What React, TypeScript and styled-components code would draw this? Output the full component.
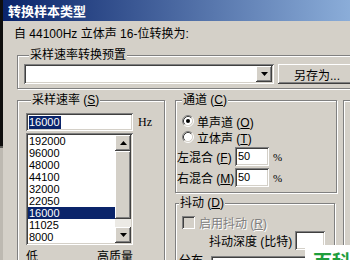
import React from "react";
import styled, { createGlobalStyle, css } from "styled-components";

const Global = createGlobalStyle`
  html, body { margin: 0; padding: 0; background: #d4d0c8; }
  body {
    width: 350px; height: 260px; overflow: hidden;
    font-family: "Liberation Sans", "Noto Sans CJK SC", sans-serif;
    font-size: 12px; color: #000;
  }
  * { box-sizing: border-box; }
`;

const raised = css`
  background: #d4d0c8;
  box-shadow: inset -1px -1px #404040, inset 1px 1px #fff, inset -2px -2px #808080, inset 2px 2px #d4d0c8;
`;
const sunken = css`
  box-shadow: inset 1px 1px #808080, inset -1px -1px #fff, inset 2px 2px #404040, inset -2px -2px #d4d0c8;
`;

const Screen = styled.div`
  position: relative;
  display: flex;
  width: 350px;
  height: 260px;
  overflow: hidden;
`;

const Edge = styled.div`
  flex: 0 0 3px;
  background: linear-gradient(to bottom, #0e0e0e 0, #0e0e0e 146px, #5a5a56 146px, #5a5a56 148px, #bdb9b1 148px);
`;

const Window = styled.div`
  flex: 0 0 420px;
  display: flex;
  flex-direction: column;
`;

const TitleBar = styled.div`
  height: 21px;
  padding-left: 5px;
  background: linear-gradient(to right, #0a246a, #a6caf0);
  color: #fff;
  font-family: "Noto Sans CJK SC", sans-serif;
  font-weight: bold;
  font-size: 13px;
  line-height: 21px;
`;

const Body = styled.div`
  display: flex;
  flex-direction: column;
  padding: 6px 0 0 11px;
`;

const InfoLine = styled.div`
  line-height: 14px;
  white-space: nowrap;
`;

const Group = styled.fieldset`
  margin: 0;
  padding: 0;
  min-width: 0;
  border: 1px solid #808080;
  box-shadow: inset 1px 1px #fff, 1px 1px #fff;
`;

const Legend = styled.legend<{ $ml?: number }>`
  margin-left: ${(p) => p.$ml ?? 5}px;
  padding: 0 1px;
  line-height: 14px;
  background: #d4d0c8;
  white-space: nowrap;
`;

const PresetGroup = styled(Group)`
  margin: 7px 0 0 3px;
  width: 380px;
  padding: 2px 0 4px 6px;
  display: flex;
  gap: 4px;
`;

const Combo = styled.div`
  width: 250px;
  height: 20px;
  padding: 2px;
  background: #fff;
  ${sunken};
  display: flex;
  justify-content: flex-end;
`;

const DropBtn = styled.div`
  width: 16px;
  height: 16px;
  ${raised};
  display: flex;
  align-items: center;
  justify-content: center;
`;

const PushBtn = styled.div`
  width: 78px;
  height: 20px;
  ${raised};
  display: flex;
  align-items: center;
  justify-content: center;
  white-space: nowrap;
`;

const Row = styled.div`
  display: flex;
  align-items: flex-start;
  margin: 4px 0 0 3px;
`;

const SampleGroup = styled(Group)`
  width: 148px;
  height: 200px;
  padding: 6px 0 0 8px;
`;

const FieldRow = styled.div`
  display: flex;
  align-items: center;
  gap: 5px;
`;

const TextBox = styled.div<{ $w: number; $h?: number }>`
  width: ${(p) => p.$w}px;
  height: ${(p) => p.$h ?? 19}px;
  padding: 2px 0 0 3px;
  background: #fff;
  ${sunken};
  font-size: 11px;
  line-height: 14px;
  flex: none;
`;

const Selected = styled.span`
  display: inline-block;
  background: #0a246a;
  color: #fff;
  line-height: 13px;
  padding-right: 1px;
`;

const Unit = styled.span`
  font-family: "Liberation Serif", serif;
  font-size: 12px;
`;

const ListBox = styled.div`
  margin-top: 2px;
  width: 107px;
  height: 112px;
  padding: 2px;
  background: #fff;
  ${sunken};
  display: flex;
`;

const Items = styled.div`
  flex: 1;
  display: flex;
  flex-direction: column;
`;

const Item = styled.div<{ $sel?: boolean }>`
  height: 12px;
  line-height: 12px;
  font-size: 11px;
  padding-left: 1px;
  background: ${(p) => (p.$sel ? "#0a246a" : "transparent")};
  color: ${(p) => (p.$sel ? "#fff" : "#000")};
`;

const ScrollBar = styled.div`
  width: 16px;
  display: flex;
  flex-direction: column;
`;

const ScrollBtn = styled.div`
  width: 16px;
  height: 16px;
  ${raised};
  display: flex;
  align-items: center;
  justify-content: center;
  flex: none;
`;

const Thumb = styled.div`
  height: 68px;
  ${raised};
  flex: none;
`;

const Track = styled.div`
  flex: 1;
  background: #eceae5;
`;

const ScaleRow = styled.div`
  width: 107px;
  margin-top: 5px;
  display: flex;
  justify-content: space-between;
  line-height: 14px;
`;

const Column = styled.div`
  margin-left: 10px;
  width: 162px;
  display: flex;
  flex-direction: column;
`;

const ChannelGroup = styled(Group)`
  width: 162px;
  padding: 6px 0 5px 1px;
  display: flex;
  flex-direction: column;
`;

const OptionRow = styled.div`
  height: 16px;
  margin-left: 5px;
  display: flex;
  align-items: center;
  gap: 3px;
  white-space: nowrap;
`;

const MixRow = styled.div`
  height: 19px;
  margin-top: 2px;
  display: flex;
  align-items: center;
  white-space: nowrap;
`;

const MixLabel = styled.span`
  width: 58px;
  flex: none;
`;

const Percent = styled.span`
  margin-left: 4px;
  font-family: "Liberation Serif", serif;
  font-size: 11px;
`;

const DitherGroup = styled(Group)`
  margin-top: 3px;
  width: 160px;
  height: 90px;
  padding: 5px 0 0 0;
  display: flex;
  flex-direction: column;
`;

const CheckRow = styled.div`
  height: 14px;
  margin-left: 6px;
  display: flex;
  align-items: center;
  gap: 4px;
  white-space: nowrap;
`;

const CheckBox = styled.span`
  width: 13px;
  height: 13px;
  background: #d4d0c8;
  ${sunken};
  flex: none;
`;

const Disabled = styled.span`
  color: #808080;
  text-shadow: 1px 1px #fff;
`;

const DepthRow = styled.div`
  height: 19px;
  margin-top: 2px;
  padding-left: 33px;
  display: flex;
  align-items: center;
  gap: 3px;
  white-space: nowrap;
`;

const ShapeRow = styled.div`
  margin-top: 4px;
  padding-left: 3px;
  display: flex;
  align-items: flex-start;
  gap: 8px;
  line-height: 14px;
  white-space: nowrap;
`;

const ShapeBox = styled.div`
  margin-top: 2px;
  width: 110px;
  height: 20px;
  background: #fff;
  ${sunken};
`;

const RightGroup = styled(Group)`
  margin: 7px 0 0 6px;
  width: 60px;
  height: 200px;
`;

const Watermark = styled.div`
  position: absolute;
  left: 305px;
  top: 245px;
  width: 50px;
  height: 20px;
  padding: 6px 0 0 8px;
  background: #fff;
  color: #1f9e3c;
  font-family: "Noto Sans CJK SC", sans-serif;
  font-weight: bold;
  font-size: 19px;
  line-height: 20px;
  white-space: nowrap;
`;

const Arrow = ({ dir }: { dir: "up" | "down" }) => (
  <svg width="7" height="4" viewBox="0 0 7 4">
    <path d={dir === "up" ? "M3.5 0L7 4H0z" : "M0 0h7L3.5 4z"} fill="#000" />
  </svg>
);

const Radio = ({ checked }: { checked?: boolean }) => (
  <svg width="12" height="12" viewBox="0 0 12 12">
    <circle cx="6" cy="6" r="4.5" fill="#fff" />
    <path d="M2.11 9.89A5.5 5.5 0 0 1 9.89 2.11" fill="none" stroke="#808080" />
    <path d="M9.89 2.11A5.5 5.5 0 0 1 2.11 9.89" fill="none" stroke="#fff" />
    <path d="M2.82 9.18A4.5 4.5 0 0 1 9.18 2.82" fill="none" stroke="#404040" />
    <path d="M9.18 2.82A4.5 4.5 0 0 1 2.82 9.18" fill="none" stroke="#d4d0c8" />
    {checked && <circle cx="6" cy="6" r="2" fill="#000" />}
  </svg>
);

const rates = ["192000", "96000", "48000", "44100", "32000", "22050", "16000", "11025", "8000"];

export default function App() {
  return (
    <>
      <Global />
      <Screen>
        <Edge />
        <Window>
          <TitleBar>转换样本类型</TitleBar>
          <Body>
            <InfoLine>自 44100Hz 立体声 16-位转换为:</InfoLine>
            <PresetGroup>
              <Legend>采样速率转换预置</Legend>
              <Combo>
                <DropBtn>
                  <Arrow dir="down" />
                </DropBtn>
              </Combo>
              <PushBtn>另存为...</PushBtn>
            </PresetGroup>
            <Row>
              <SampleGroup>
                <Legend>
                  采样速率 (<u>S</u>)
                </Legend>
                <FieldRow>
                  <TextBox $w={107} $h={18}>
                    <Selected>16000</Selected>
                  </TextBox>
                  <Unit>Hz</Unit>
                </FieldRow>
                <ListBox>
                  <Items>
                    {rates.map((r) => (
                      <Item key={r} $sel={r === "16000"}>
                        {r}
                      </Item>
                    ))}
                  </Items>
                  <ScrollBar>
                    <ScrollBtn>
                      <Arrow dir="up" />
                    </ScrollBtn>
                    <Thumb />
                    <Track />
                    <ScrollBtn>
                      <Arrow dir="down" />
                    </ScrollBtn>
                  </ScrollBar>
                </ListBox>
                <ScaleRow>
                  <span>低</span>
                  <span>高质量</span>
                </ScaleRow>
              </SampleGroup>
              <Column>
                <ChannelGroup>
                  <Legend>
                    通道 (<u>C</u>)
                  </Legend>
                  <OptionRow>
                    <Radio checked />
                    <span>
                      单声道 (<u>O</u>)
                    </span>
                  </OptionRow>
                  <OptionRow>
                    <Radio />
                    <span>
                      立体声 (<u>T</u>)
                    </span>
                  </OptionRow>
                  <MixRow>
                    <MixLabel>
                      左混合 (<u>F</u>)
                    </MixLabel>
                    <TextBox $w={34}>50</TextBox>
                    <Percent>%</Percent>
                  </MixRow>
                  <MixRow>
                    <MixLabel>
                      右混合 (<u>M</u>)
                    </MixLabel>
                    <TextBox $w={34}>50</TextBox>
                    <Percent>%</Percent>
                  </MixRow>
                </ChannelGroup>
                <DitherGroup>
                  <Legend $ml={3}>
                    抖动 (<u>D</u>)
                  </Legend>
                  <CheckRow>
                    <CheckBox />
                    <Disabled>
                      启用抖动 (<u>R</u>)
                    </Disabled>
                  </CheckRow>
                  <DepthRow>
                    <span>抖动深度 (比特)</span>
                    <TextBox $w={30} />
                  </DepthRow>
                  <ShapeRow>
                    <span>分布</span>
                    <ShapeBox />
                  </ShapeRow>
                </DitherGroup>
              </Column>
              <RightGroup />
            </Row>
          </Body>
        </Window>
        <Watermark>百科</Watermark>
      </Screen>
    </>
  );
}
